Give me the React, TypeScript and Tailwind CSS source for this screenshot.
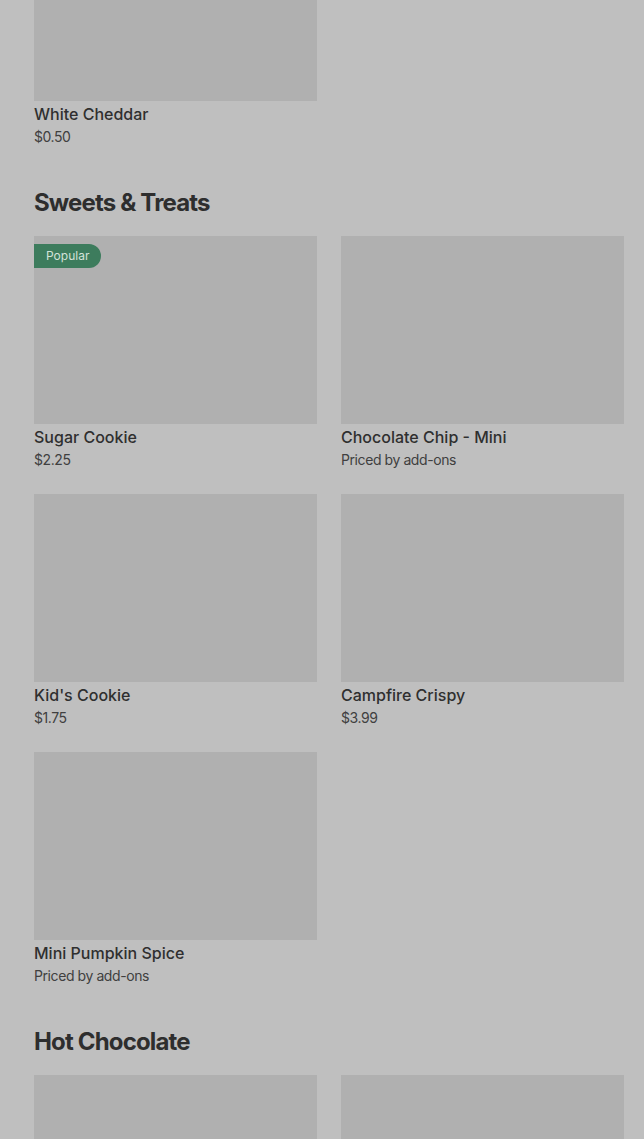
type Item = {
  name?: string
  price?: string
  popular?: boolean
}

type Section = {
  title: string
  items: Item[]
}

const sections: Section[] = [
  {
    title: 'Sweets & Treats',
    items: [
      { name: 'Sugar Cookie', price: '$2.25', popular: true },
      { name: 'Chocolate Chip - Mini', price: 'Priced by add-ons' },
      { name: "Kid's Cookie", price: '$1.75' },
      { name: 'Campfire Crispy', price: '$3.99' },
      { name: 'Mini Pumpkin Spice', price: 'Priced by add-ons' },
    ],
  },
  {
    // names sit below the fold, only the photos show
    title: 'Hot Chocolate',
    items: [{}, {}],
  },
]

function ItemCard({ item }: { item: Item }) {
  return (
    <div className="flex flex-col">
      <div className="relative h-[188px] bg-[#b0b0b0]">
        {item.popular && (
          <span className="absolute left-0 top-2 h-6 rounded-r-full bg-[#3d7c5d] px-3 text-xs leading-6 text-[#d3e2d9]">
            Popular
          </span>
        )}
      </div>
      {item.name && (
        <div className="mt-0.5 text-base font-medium leading-[22px] text-[#2f2f2f]">{item.name}</div>
      )}
      {item.price && (
        <div className="text-sm leading-6 tracking-[-0.03em] text-[#404040]">{item.price}</div>
      )}
    </div>
  )
}

export default function App() {
  return (
    <div
      className="h-[1139px] overflow-hidden bg-[#bfbfbf] pl-[34px] pr-5"
      style={{ fontFamily: 'Inter, "Noto Sans", sans-serif' }}
    >
      <div className="-mt-[87px] grid grid-cols-2 gap-x-6">
        <ItemCard item={{ name: 'White Cheddar', price: '$0.50' }} />
      </div>
      {sections.map((section) => (
        <div key={section.title} className="mt-[38px]">
          <h2 className="text-2xl font-bold leading-8 tracking-[-0.035em] text-[#2e2e2e]">{section.title}</h2>
          <div className="mt-[17px] grid grid-cols-2 gap-x-6 gap-y-[22px]">
            {section.items.map((item, i) => (
              <ItemCard key={item.name ?? i} item={item} />
            ))}
          </div>
        </div>
      ))}
    </div>
  )
}
